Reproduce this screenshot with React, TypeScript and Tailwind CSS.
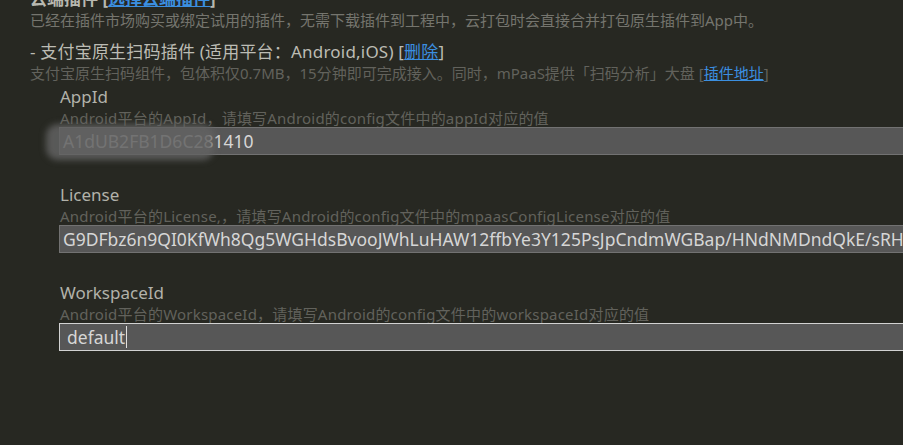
import React from "react";

const font = { fontFamily: '"Noto Sans", "Noto Sans CJK SC", sans-serif' };

type Field = {
  label: string;
  hint: string;
  value: string;
  focused?: boolean;
  blurred?: boolean;
};

const fields: Field[] = [
  {
    label: "AppId",
    hint: "Android平台的AppId，请填写Android的config文件中的appId对应的值",
    value: "A1dUB2FB1D6C281410",
    blurred: true,
  },
  {
    label: "License",
    hint: "Android平台的License,，请填写Android的config文件中的mpaasConfigLicense对应的值",
    value: "G9DFbz6n9QI0KfWh8Qg5WGHdsBvooJWhLuHAW12ffbYe3Y125PsJpCndmWGBap/HNdNMDndQkE/sRHk",
  },
  {
    label: "WorkspaceId",
    hint: "Android平台的WorkspaceId，请填写Android的config文件中的workspaceId对应的值",
    value: "default",
    focused: true,
  },
];

function FieldBlock({ f }: { f: Field }) {
  return (
    <div className="pl-[60px]">
      <div className="h-[22px] text-[17px] leading-[22px] text-[#b2b2aa]">{f.label}</div>
      <div className="h-[20px] whitespace-nowrap text-[15px] leading-[20px] tracking-[0.2px] text-[#62625c]">
        {f.hint}
      </div>
      <div
        className={`relative -ml-px mt-[-1px] flex h-[28px] w-[900px] items-center whitespace-nowrap border bg-[#575757] text-[17.5px] text-[#d6d6d6] ${
          f.focused ? "border-[#d2d2d2] pl-[7px]" : "border-[#727272] pl-[3px]"
        }`}
      >
        <span>{f.value}</span>
        {f.focused && <span className="ml-px h-[22px] w-px bg-[#e0e0e0]" />}
        {f.blurred && (
          <span className="absolute left-[-14px] top-[-4px] h-[36px] w-[168px] rounded-[12px] bg-[#626262]/85 blur-[3px]" />
        )}
      </div>
    </div>
  );
}

export default function App() {
  return (
    <div className="h-[445px] w-full overflow-hidden bg-[#272822]" style={font}>
      <div className="-mt-[11px] pl-[30px]">
        <div className="h-[20px] whitespace-nowrap text-[17px] font-bold leading-[20px] text-[#b8b8b0]">
          云端插件 [<span className="text-[#3b8fe0] underline">选择云端插件</span>]
        </div>
        <div className="mt-[1px] h-[20px] whitespace-nowrap text-[15px] leading-[20px] text-[#75756e]">
          已经在插件市场购买或绑定试用的插件，无需下载插件到工程中，云打包时会直接合并打包原生插件到App中。
        </div>
        <div className="mt-[11px] h-[22px] whitespace-nowrap text-[17px] leading-[22px] tracking-[0.2px] text-[#bcbcb4]">
          - 支付宝原生扫码插件 (适用平台：Android,iOS) [
          <span className="text-[#3b8fe0] underline">删除</span>]
        </div>
        <div className="h-[20px] whitespace-nowrap text-[15px] leading-[20px] text-[#62625c]">
          支付宝原生扫码组件，包体积仅0.7MB，15分钟即可完成接入。同时，mPaaS提供「扫码分析」大盘 [
          <span className="text-[#3b8fe0] underline">插件地址</span>]
        </div>
      </div>
      <div className="mt-[3px] flex flex-col gap-[29px]">
        {fields.map((f) => (
          <FieldBlock key={f.label} f={f} />
        ))}
      </div>
    </div>
  );
}
